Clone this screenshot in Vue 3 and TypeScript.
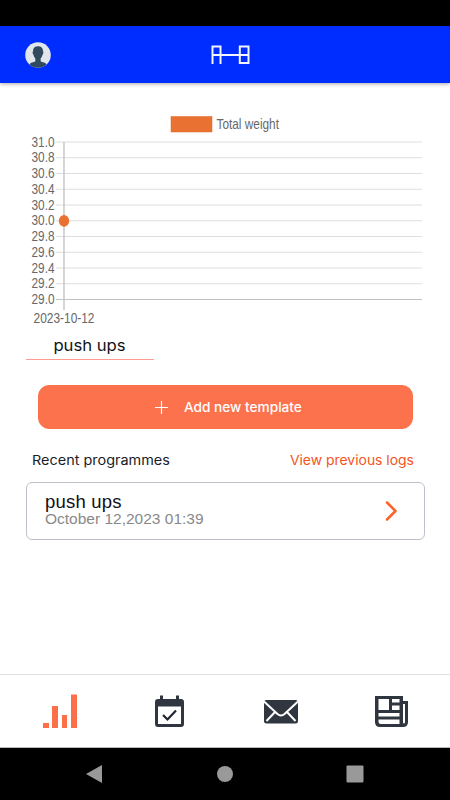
<script setup lang="ts">
const ticks: string[] = Array.from({ length: 11 }, (_, i) => (31 - i * 0.2).toFixed(1))
const lineY = (i: number): number => 59 + i * 15.75
</script>

<template>
  <div class="screen">
    <div class="status"></div>
    <header class="top">
      <svg class="avatar" width="26" height="26" viewBox="0 0 26 26">
        <defs><clipPath id="face"><circle cx="13" cy="13" r="12.8" /></clipPath></defs>
        <circle cx="13" cy="13" r="12.8" fill="#e1e6ed" />
        <path clip-path="url(#face)" fill="#324a5e" d="M13 4.200c-3.200 0-5 2-5 4.800 0 .7-.5 1-.4 1.700.1 1 .4 1.700.9 2 .4 1.700 1 2.800 1.800 3.600v3.200L5.500 21 3 26h20l-2.500-5-4.800-1.500v-3.200c.8-.8 1.400-1.900 1.800-3.600.5-.3.8-1 .9-2 .1-.7-.4-1-.4-1.700 0-2.800-1.800-4.800-5-4.800z" />
      </svg>
      <svg class="logo" width="40" height="20" viewBox="0 0 40 20">
        <path d="M2.500 19V1.500h8V19M2.500 10h27M29.800 1.500h8.700v16.500h-8.700zM29.800 10h8.700" fill="none" stroke="#f3f4ff" stroke-width="2" />
      </svg>
    </header>

    <main>
      <svg class="chart" width="450" height="247" viewBox="0 0 450 247">
        <rect x="171" y="33.500" width="41" height="15.500" fill="#e97132" stroke="#e36928" stroke-width=".5" />
        <text x="216.500" y="46" textLength="62.500" lengthAdjust="spacingAndGlyphs">Total weight</text>
        <g v-for="(tick, i) in ticks" :key="tick">
          <line x1="56" x2="422" :y1="lineY(i)" :y2="lineY(i)" :stroke="i === 10 ? '#c2c2c2' : '#dedede'" />
          <text x="31.500" :y="lineY(i) + 4.500" textLength="23" lengthAdjust="spacingAndGlyphs">{{ tick }}</text>
        </g>
        <line x1="64" x2="64" y1="59" y2="227" stroke="#c4c4c4" stroke-width="1.400" />
        <ellipse cx="64" cy="137.900" rx="5.200" ry="5.900" fill="#e97132" />
        <text x="33.500" y="239.500" textLength="61" lengthAdjust="spacingAndGlyphs">2023-10-12</text>
      </svg>

      <div class="picker"><span>push ups</span></div>

      <button class="add" type="button">
        <svg width="13" height="13" viewBox="0 0 13 13"><path d="M6.500 0v13M0 6.500h13" stroke="#fff" stroke-width="1.200" /></svg>
        <span>Add new template</span>
      </button>

      <div class="heading">
        <span class="recent">Recent programmes</span>
        <a class="previous">View previous logs</a>
      </div>

      <section class="card">
        <div class="info">
          <div class="name">push ups</div>
          <div class="date">October 12,2023 01:39</div>
        </div>
        <svg width="13" height="20" viewBox="0 0 13 20"><path d="M2 1.500 10.500 10 2 18.500" fill="none" stroke="#fa6428" stroke-width="2.500" stroke-linecap="round" stroke-linejoin="round" /></svg>
      </section>
    </main>

    <nav class="tabs">
      <svg width="36" height="36" viewBox="0 0 36 36" fill="#fc7049">
        <path d="M1 29h6v5H1zM10 12h6v22h-6zM20 21h5v13h-5zM29 .500h6V34h-6z" />
      </svg>
      <svg width="36" height="36" viewBox="-1 0 36 36">
        <path d="M7 1.500h3V5h13V1.500h3V5h2q3 0 3 3v22q0 3-3 3H5q-3 0-3-3V8q0-3 3-3h2z" fill="#303640" />
        <path d="M5 12.500h23V30H5z" fill="#fff" />
        <path d="m10 21.500 4.500 4.500 8.500-9" fill="none" stroke="#20262f" stroke-width="2.200" transform="translate(0 -.5)" />
      </svg>
      <svg width="36" height="36" viewBox="0 0 36 36">
        <rect x="1" y="6" width="34" height="23.500" rx="2.500" fill="#303640" />
        <path d="M1 7.500 14.500 20q3.500 3 7 0L35 7.500M12 18 3.500 27M24 18l8.500 9" fill="none" stroke="#fff" stroke-width="2" />
      </svg>
      <svg width="36" height="36" viewBox="0 0 36 36">
        <path d="M2 2h28v5h5v21q0 5-5 5H7q-5 0-5-5z" fill="#303640" />
        <path d="M5.500 5H16v11H5.500zM19 5h7.500v3.500H19zM19 11.500h7.500V16H19zM5.500 19h21v3.500h-21zM5.500 25.500h21V30H8q-2.500 0-2.500-2.500zM30 10h2v18q0 1.500-1 1.500T30 28z" fill="#fff" />
      </svg>
    </nav>

    <footer class="system">
      <svg width="18" height="20" viewBox="0 0 18 20"><path d="M1 10 17 1v18z" fill="#999" /></svg>
      <svg width="18" height="20" viewBox="0 0 18 20"><circle cx="9" cy="10" r="8" fill="#999" /></svg>
      <svg width="18" height="20" viewBox="0 0 18 20"><rect x=".500" y="1.500" width="17" height="17" rx="1" fill="#999" /></svg>
    </footer>
  </div>
</template>

<style>
body { background: #fff; }
</style>

<style scoped>
* { box-sizing: border-box; }
svg { display: block; flex: none; }
.screen { width: 450px; height: 800px; display: flex; flex-direction: column; background: #fff; font-family: Inter, "Open Sans", sans-serif; overflow: hidden; }
.status { height: 26px; background: #000; }
.top { height: 57px; background: #002dff; display: flex; align-items: center; padding: 0 25px; box-shadow: 0 1px 4px rgba(0, 0, 0, .35); }
.logo { margin-left: 159px; }
main { flex: 1; }
.chart { font: 14.500px "Liberation Sans", Arial, sans-serif; fill: #686868; }
.picker { width: 128px; height: 30px; margin-left: 26px; border-bottom: 1px solid #ff9c92; text-align: center; font-size: 15px; line-height: 31px; color: #101219; }
.picker span { display: inline-block; transform: scaleX(1.11); }
.add { width: 375px; height: 44px; margin: 25px 0 0 38px; padding: 0 0 0 116px; border: 1px solid #fb7248; border-radius: 11px; background: #fb724d; color: #fff; display: flex; align-items: center; gap: 16px; font: 500 13px Inter, sans-serif; }
.add span { transform: scaleX(1.050); transform-origin: left; }
.heading { height: 53px; padding: 8px 36px 0 32px; display: flex; justify-content: space-between; font-size: 13px; line-height: 46px; }
.recent { color: #191b26; transform: scaleX(1.110); transform-origin: left; }
.previous { color: #f45420; transform: scaleX(1.070); transform-origin: right; }
.card { width: 399px; height: 58px; margin-left: 26px; padding: 0 26px 0 18px; border: 1px solid #bdc1c9; border-radius: 6px; display: flex; align-items: center; justify-content: space-between; font-family: "Liberation Sans", Arial, sans-serif; }
.info { padding-bottom: 3px; }
.name { font-size: 18.500px; line-height: 17px; color: #10101a; letter-spacing: .200px; }
.date { font-size: 15.500px; line-height: 17px; color: #898989; }
.tabs { height: 74px; border-top: 1px solid #e2e2e2; border-bottom: 1px solid #bbb; display: flex; justify-content: space-between; align-items: center; padding: 1px 41px 0 42px; }
.system { height: 52px; background: #000; display: flex; justify-content: space-between; align-items: center; padding: 0 86px 0 85px; }
</style>
